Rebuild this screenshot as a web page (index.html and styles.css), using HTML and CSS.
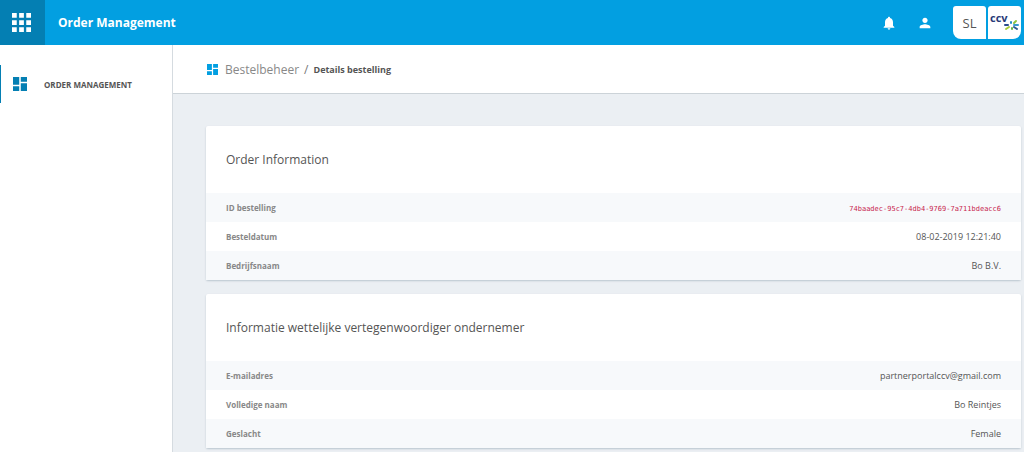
FILE: index.html
```html
<!DOCTYPE html>
<html lang="nl">
<head>
<meta charset="utf-8">
<meta name="viewport" content="width=device-width, initial-scale=1">
<title>Order Management</title>
<link rel="stylesheet" href="styles.css">
</head>
<body>
<svg class="sprite" aria-hidden="true">
  <symbol id="dashboard" viewBox="3 3 18 18"><path d="M3 13h8V3H3v10zm0 8h8v-6H3v6zm10 0h8V11h-8v10zm0-18v6h8V3h-8z"/></symbol>
</svg>
<header class="topbar">
  <button class="apps" type="button" aria-label="Apps">
    <svg viewBox="4 4 16 16"><path d="M4 8h4V4H4v4zm6 12h4v-4h-4v4zm-6 0h4v-4H4v4zm0-6h4v-4H4v4zm6 0h4v-4h-4v4zm6-10v4h4V4h-4zm-6 4h4V4h-4v4zm6 6h4v-4h-4v4zm0 6h4v-4h-4v4z"/></svg>
  </button>
  <span class="app-title">Order Management</span>
  <nav class="tools">
    <button class="tool" type="button" aria-label="Notifications">
      <svg viewBox="0 0 24 24"><path d="M12 22c1.1 0 2-.9 2-2h-4c0 1.1.9 2 2 2zm6-6v-5c0-3.070-1.640-5.640-4.500-6.320V4c0-.83-.67-1.500-1.500-1.500s-1.500.67-1.500 1.500v.68C7.630 5.360 6 7.920 6 11v5l-2 2v1h16v-1l-2-2z"/></svg>
    </button>
    <button class="tool" type="button" aria-label="Account">
      <svg viewBox="0 0 24 24"><path d="M12 12c2.210 0 4-1.790 4-4s-1.790-4-4-4-4 1.790-4 4 1.790 4 4 4zm0 2c-2.670 0-8 1.340-8 4v2h16v-2c0-2.660-5.330-4-8-4z"/></svg>
    </button>
  </nav>
  <div class="badges">
    <button class="badge badge-user" type="button">SL</button>
    <a class="badge badge-brand" href="#" aria-label="CCV">
      <span class="brand-name">ccv</span>
      <svg class="brand-mark" viewBox="0 0 16 12">
        <g fill="none" stroke-width="2" stroke-linecap="round">
          <path stroke="#2b4c8c" d="M5 6H2"/>
          <path stroke="#2490c4" d="M8 4V3"/>
          <path stroke="#8cc43c" d="m11 4 2-2"/>
          <path stroke="#3a9ccc" d="M11 6h4"/>
          <path stroke="#2c5c96" d="m11 8 3 2"/>
          <path stroke="#a8ce38" d="M6 8 3 10"/>
          <path stroke="#68b84a" d="M9 9v1"/>
        </g>
      </svg>
    </a>
  </div>
</header>
<div class="layout">
  <nav class="sidebar">
    <a class="side-link" href="#"><svg><use href="#dashboard"/></svg><span>ORDER MANAGEMENT</span></a>
  </nav>
  <div class="content">
    <nav class="breadcrumb">
      <svg><use href="#dashboard"/></svg>
      <a class="crumb" href="#">Bestelbeheer</a>
      <span class="slash">/</span>
      <span class="current">Details bestelling</span>
    </nav>
    <main class="cards">
      <section class="card">
        <h2>Order Information</h2>
        <table>
          <tr><th scope="row">ID bestelling</th><td><code>74baadec-95c7-4db4-9769-7a711bdeacc6</code></td></tr>
          <tr><th scope="row">Besteldatum</th><td>08-02-2019 12:21:40</td></tr>
          <tr><th scope="row">Bedrijfsnaam</th><td>Bo B.V.</td></tr>
        </table>
      </section>
      <section class="card">
        <h2>Informatie wettelijke vertegenwoordiger ondernemer</h2>
        <table>
          <tr><th scope="row">E-mailadres</th><td>partnerportalccv@gmail.com</td></tr>
          <tr><th scope="row">Volledige naam</th><td>Bo Reintjes</td></tr>
          <tr><th scope="row">Geslacht</th><td>Female</td></tr>
        </table>
      </section>
    </main>
  </div>
</div>
</body>
</html>
```
FILE: styles.css
```css
* { box-sizing: border-box; }
body {
  margin: 0;
  min-height: 100vh;
  display: flex;
  flex-direction: column;
  background: #ebeff3;
  color: #555;
  font-family: "Open Sans", "Noto Sans", sans-serif;
  font-size: 8px;
}
button { border: 0; padding: 0; font: inherit; cursor: pointer; }
a { color: inherit; text-decoration: none; }
svg { display: block; fill: currentColor; }
.sprite { display: none; }

.topbar {
  display: flex;
  align-items: center;
  height: 45px;
  padding-right: 3px;
  background: #029fe1;
  color: #fff;
}
.apps {
  display: flex;
  align-items: center;
  width: 45px;
  height: 45px;
  padding-left: 12px;
  background: #047fb3;
  color: #fff;
}
.apps svg { width: 19px; height: 19px; }
.app-title { margin-left: 13px; font-size: 12px; font-weight: 700; }
.tools { display: flex; gap: 20px; margin-left: auto; }
.tool { background: none; color: #fff; }
.tool svg { width: 16px; height: 16px; }
.badges { display: flex; gap: 2px; margin-left: 20px; }
.badge {
  display: flex;
  align-items: center;
  justify-content: center;
  width: 33px;
  height: 33px;
  background: #fff;
}
.badge-user { border-radius: 3px 3px 0 8px; color: #555; font-size: 13px; }
.badge-brand { position: relative; border-radius: 3px 3px 8px 0; }
.brand-name {
  position: absolute;
  top: 4px;
  left: 2px;
  color: #283a78;
  font-size: 11px;
  font-weight: 700;
  line-height: 16px;
}
.brand-mark { position: absolute; top: 13px; left: 15px; width: 16px; height: 12px; }

.layout { display: flex; flex: 1; }
.sidebar {
  flex: 0 0 173px;
  padding-top: 20px;
  background: #fff;
  border-right: 1px solid #d5dbe0;
}
.side-link {
  display: flex;
  align-items: center;
  gap: 17px;
  height: 38px;
  padding-left: 12px;
  border-left: 1px solid #047fb3;
  font-size: 8px;
  font-weight: 700;
}
.side-link svg { width: 14px; height: 14px; color: #047fb3; }
.content { flex: 1; min-width: 0; }
.breadcrumb {
  display: flex;
  align-items: center;
  height: 49px;
  padding-left: 34px;
  background: #fff;
  border-bottom: 1px solid #ccd3d8;
}
.breadcrumb svg { width: 11px; height: 11px; color: #029fe1; }
.crumb { margin-left: 7px; color: #888; font-size: 12px; }
.slash { margin: 0 5px; color: #777; font-size: 12px; }
.current { font-size: 9px; font-weight: 700; }

.cards { display: grid; gap: 14px; padding: 32px 3px 3px 33px; }
.card { background: #fff; border-radius: 2px; box-shadow: 0 1px 2px #b9c5ce; }
h2 {
  margin: 0;
  padding: 24px 20px 23px;
  font-size: 12px;
  font-weight: 400;
  line-height: 20px;
}
table { width: 100%; border-collapse: collapse; }
tr:nth-child(odd) { background: #f7f9fb; }
th, td { height: 29px; padding: 0 20px; }
th { text-align: left; color: #888; font-size: 8px; font-weight: 700; }
td { text-align: right; font-size: 9px; }
code { color: #c7254e; font-family: "DejaVu Sans Mono", monospace; font-size: 7px; }
```
